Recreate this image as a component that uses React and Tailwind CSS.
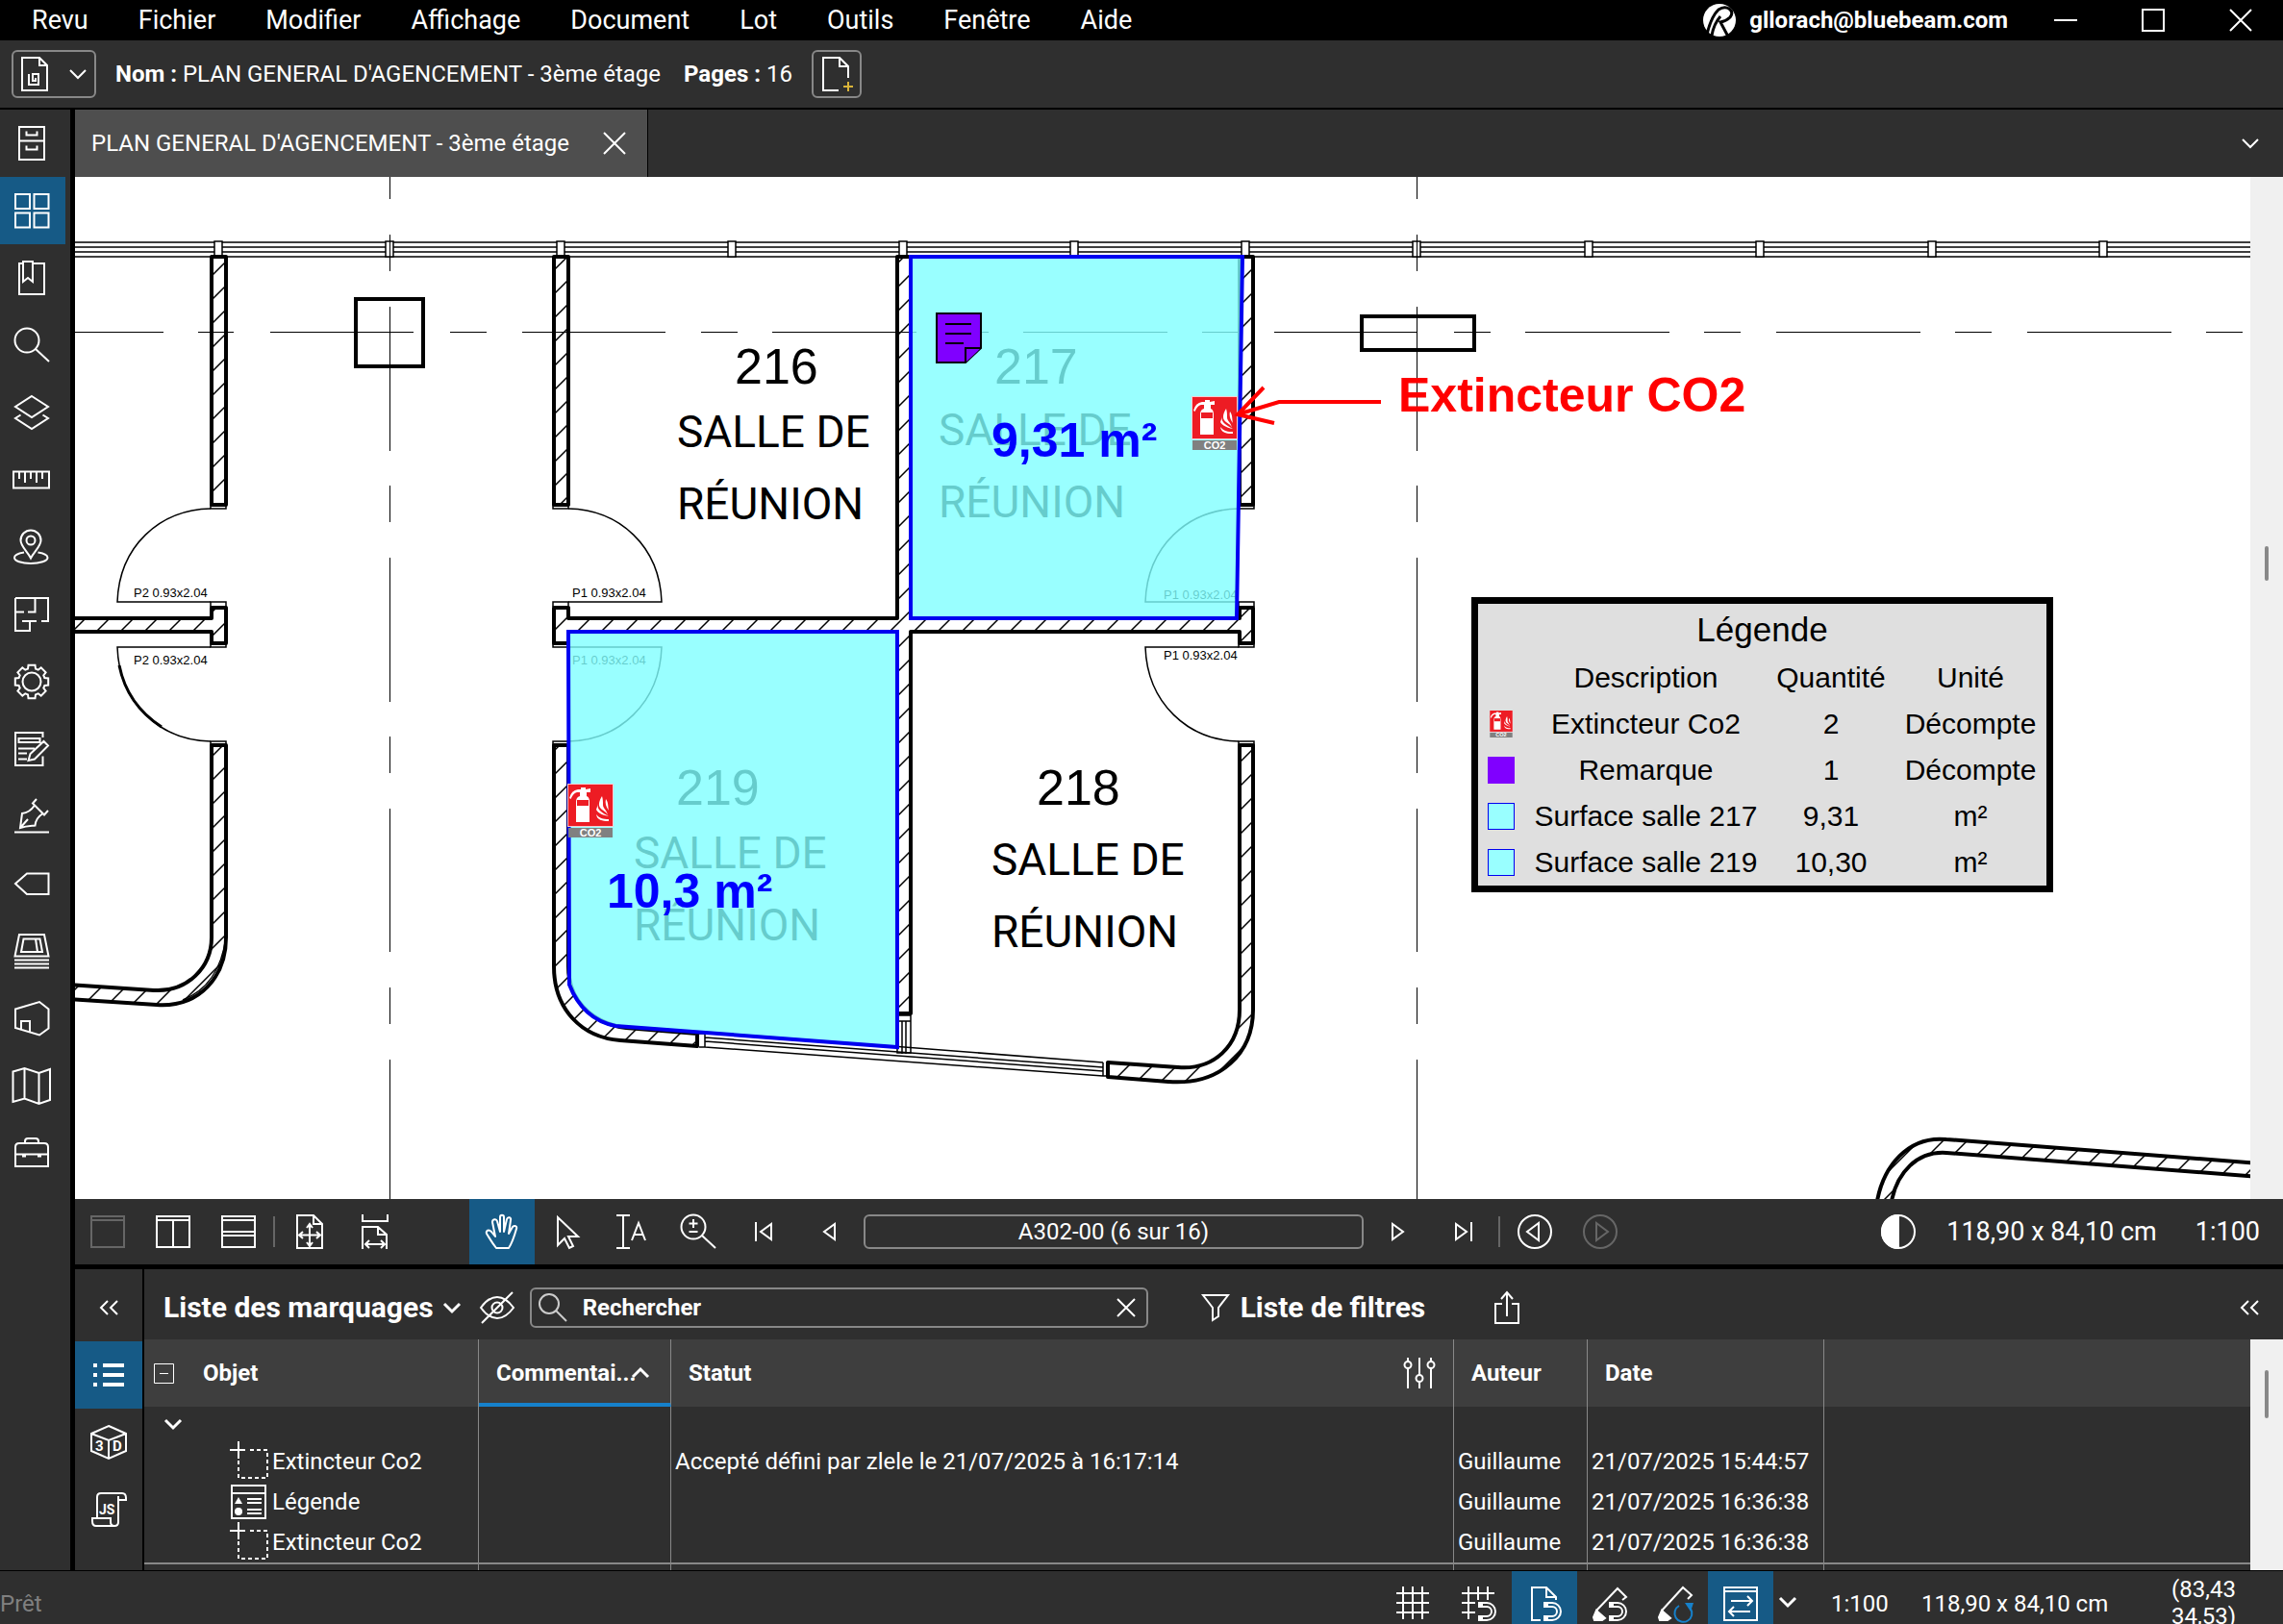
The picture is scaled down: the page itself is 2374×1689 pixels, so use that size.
import React, { useState } from 'react';

const MENUS = ['Revu', 'Fichier', 'Modifier', 'Affichage', 'Document', 'Lot', 'Outils', 'Fenêtre', 'Aide'];

const COLS = [78, 227, 405, 583, 761, 939, 1117, 1295, 1473, 1652, 1830, 2009, 2187];
const AXIS_X = [
  [78, 170], [206, 243], [281, 430], [468, 506], [543, 692], [729, 767], [803, 953], [990, 1028],
  [1064, 1214], [1250, 1288], [1325, 1474], [1512, 1550], [1586, 1736], [1772, 1810], [1847, 1997],
  [2033, 2071], [2108, 2258], [2294, 2332],
];
const AXIS_Y = [
  [184, 207], [244, 282], [319, 469], [505, 543], [580, 730], [766, 804], [841, 990], [1027, 1065], [1102, 1247],
];

const ROWS = [
  { icon: 'count', objet: 'Extincteur Co2', statut: 'Accepté défini par zlele le 21/07/2025 à 16:17:14', auteur: 'Guillaume', date: '21/07/2025 15:44:57' },
  { icon: 'legend', objet: 'Légende', statut: '', auteur: 'Guillaume', date: '21/07/2025 16:36:38' },
  { icon: 'count', objet: 'Extincteur Co2', statut: '', auteur: 'Guillaume', date: '21/07/2025 16:36:38' },
];

const LEGEND = [
  { swatch: 'badge', label: 'Extincteur Co2', qty: '2', unit: 'Décompte' },
  { swatch: 'note', label: 'Remarque', qty: '1', unit: 'Décompte' },
  { swatch: 'area', label: 'Surface salle 217', qty: '9,31', unit: 'm²' },
  { swatch: 'area', label: 'Surface salle 219', qty: '10,30', unit: 'm²' },
];

function Icon({ children, width = 36, height = 36, stroke = 2, className = '' }) {
  return (
    <svg
      width={width}
      height={height}
      viewBox={`0 0 ${width} ${height}`}
      fill="none"
      stroke="currentColor"
      strokeWidth={stroke}
      className={`shrink-0 overflow-visible ${className}`}
      aria-hidden="true"
    >
      {children}
    </svg>
  );
}

// eight square teeth around a ring
function gearPath() {
  const pts = [];
  for (let i = 0; i < 8; i++) {
    const a = (i * Math.PI) / 4 - Math.PI / 2;
    [[-0.29, 14], [-0.2, 17.5], [0.2, 17.5], [0.29, 14]].forEach(([d, r]) => {
      pts.push(`${(18 + r * Math.cos(a + d)).toFixed(1)} ${(18 + r * Math.sin(a + d)).toFixed(1)}`);
    });
  }
  return `M${pts.join('L')}Z`;
}

const Chevron = ({ className = '', stroke = 2 }) => (
  <Icon width={18} height={10} stroke={stroke} className={className}><path d="M1 1l8 8 8-8" /></Icon>
);
const Close = () => <Icon width={24} height={24}><path d="M1 1l22 22M23 1L1 23" /></Icon>;
const DoubleLeft = () => <Icon width={20} height={14} stroke={2}><path d="M9 0L2 7l7 7M19 0l-7 7 7 7" /></Icon>;

const SIDE_ICONS = [
  { name: 'Accès aux fichiers', icon: <path d="M5 1h26v34H5zM5 15.500h26M12.500 5.500v4h11v-4M12.500 20.500v4h11v-4" /> },
  { name: 'Vignettes', icon: <path d="M1 1h15v15H1zM20.500 1h15v15h-15zM1 20.500h15v15H1zM20.500 20.500h15v15h-15z" /> },
  { name: 'Signets', icon: <path d="M8 3H5v32h26V3H20M9 1h10v21l-5-4-5 4z" /> },
  { name: 'Rechercher', icon: <><circle cx="13" cy="13" r="12.500" /><path d="M22 22l14 13" /></> },
  { name: 'Calques', icon: <path d="M18 1l17 11-17 11L1 12zM6.500 20.500L1 24l17 11 17-11-5.500-3.500" /> },
  { name: 'Mesures', icon: <path d="M-1 9.500h37v17H-1zM5 10v7M11 10v11M17 10v7M23 10v11M29 10v7" /> },
  { name: 'Lieux', icon: <><path d="M17 29.500C13 22 6.500 17 6.500 11a10.500 10.500 0 0 1 21 0C27.500 17 21 22 17 29.500z" /><circle cx="17" cy="11" r="4.500" /><path d="M10 23.500C4 24.500 0 26.500 0 29c0 3.500 7.500 6 17 6s17.500-2.500 17.500-6c0-2.500-4-4.500-10-5.500" /></> },
  { name: 'Espaces', icon: <path d="M10 15.500H1M1 1h34v24h-7M1 1v34h15V25M8 25h15M21.500 1v14.500H14" /> },
  { name: 'Propriétés', icon: <><path d={gearPath()} /><circle cx="18" cy="18" r="9.500" /></> },
  { name: 'Formulaires', icon: <path d="M29.500 6V1H1v34h28.500V25.500M4.500 7h22v4h-22zM4 17.500h17M4 22.500h9M4 28.500h9M14.500 30l2-7L30.500 10l4.500 4.500L21 28.500z" /> },
  { name: 'Signatures', icon: <><path d="M23 0l-4 4.500 12 12L35 12M21 6.500c-4 6-8 8-13 8.500L6 30c7-2 12-2 15.500-2.500C22 22 25 18 29 15.500M6 30l8-9" /><path d="M0 34.500h36" /></> },
  { name: 'Jeux', icon: <path d="M1 18L13 7.500h22.500v21.500H13z" /> },
  { name: 'Lots', icon: <path d="M5 1h26l4.500 22.500H.5zM9.500 5.500h17L29 19H7zM22 5.500l2 13.500M0 27.500h36M0 31.500h36M0 35.500h36" /> },
  { name: 'Modèles 3D', icon: <path d="M1 8.500L26 1l9.500 7.500v20L26 35.500 1 28zM7 29.500V21h9v11" /> },
  { name: 'Carte', icon: <path d="M-1.500 3.500L10.500 0l15 5L37 1v32l-11.500 4-15-5.500L-1.500 35zM10.500 0v31.500M25.500 5v32" /> },
  { name: 'Outils', icon: <><path d="M1 32V12q0-4 4-4h26q4 0 4 4v20zM11 8V6q0-3 3-3h8q3 0 3 3v2M1 19.500h34" /><path d="M8 21h4M24 21h4" strokeWidth="3" /></> },
];

function Co2Badge({ x, y }) {
  return (
    <g transform={`translate(${x} ${y})`}>
      <rect x="-1" y="-1" width="48" height="45" fill="#f7c9cf" />
      <rect width="46" height="43" fill="#ed1c24" />
      <path d="M8 39V18q0-5 4-6V8H9Q5 9 2.500 15L1 14Q3 6 10 5h3V3h5v2l5-1v4h-4v4q3 1 3 6v21z" fill="#fff" />
      <rect x="9" y="16" width="12" height="6" fill="#ed1c24" />
      <path d="M35 12c-3 5-4 9-2 12 2 3 7 4 8 8-1-6-5-7-5-11 0-3 0-6-1-9zM39 15c-1 4 0 8 3 12-1-4 0-8-3-12zM31 20c-2 6 4 9 11 13-5-1-11-3-13-7zM29 31c1 6 6 7 13 7v-2c-6 0-10-1-13-5z" fill="#fff" />
      <rect y="45" width="46" height="10" fill="#808080" />
      <text x="23" y="54" textAnchor="middle" fontSize="11" fontWeight="700" fill="#fff">CO2</text>
    </g>
  );
}

function Room({ x, y, y2, y3, number, dx }) {
  return (
    <g fill="#000">
      <text x={x + dx} y={y} fontSize="52">{number}</text>
      <g fontSize="46" className="font-[Roboto,sans-serif]">
        <text x={x} y={y2}>SALLE DE</text>
        <text x={x} y={y3}>RÉUNION</text>
      </g>
    </g>
  );
}

function FloorPlan() {
  return (
    <svg
      className="block h-[1063px] w-[2263px] shrink-0 font-['Liberation_Sans',sans-serif]"
      viewBox="78 184 2263 1063"
      role="img"
      aria-label="Plan du 3ème étage"
    >
      <defs>
        <pattern id="hatch" width="25" height="25" x="7" patternUnits="userSpaceOnUse">
          <path d="M-5 30L30-5M-5 5L5-5M20 30L30 20" stroke="#000" strokeWidth="1.500" />
        </pattern>
      </defs>

      {/* facade */}
      <g stroke="#000" strokeWidth="1.500" fill="none">
        <path d="M78 252H2341M78 257H2341M78 262H2341M78 267H2341" />
        {COLS.slice(1).map((x) => <rect key={x} x={x - 4} y="251" width="8" height="16" fill="#fff" />)}
      </g>

      {/* walls */}
      <g stroke="#000" strokeWidth="4" fill="url(#hatch)" strokeLinejoin="round">
        <rect x="220" y="267" width="15" height="258" />
        <rect x="576" y="267" width="15" height="258" />
        <rect x="1289" y="267" width="14" height="258" />
        <path d="M70 643H220V632H235V669H220V657H70z" />
        <path d="M933 267H947V643H1289V632H1303V669H1289V657H947V1054H933V657H591V669H576V632H591V643H933z" />
        <path d="M235 775V975C235 1015 208 1048 163 1045L70 1039V1024L160 1030C195 1032 220 1006 220 975V775z" />
        <path d="M576 775V1005C576 1050 605 1079 645 1082L725 1088V1075L651 1069C615 1064 591 1040 591 1005V775z" />
        <path d="M1289 775V1050C1289 1088 1262 1113 1225 1110L1152 1105V1120L1215 1125C1270 1129 1303 1095 1303 1050V775z" />
        <path d="M1951 1255C1957 1212 1985 1181 2024 1185L2350 1210V1224L2024 1199C1995 1197 1971 1218 1966 1255z" />
      </g>

      {/* doors and glazing */}
      <g stroke="#000" strokeWidth="1.500" fill="none">
        <path d="M219 525v4h16v-4M219 631v-5h16v5M219 669v4h16v-4M219 775v-4h16v4" />
        <path d="M575 525v4h16v-4M575 631v-5h16v5M575 669v4h16v-4M575 775v-4h16v4" />
        <path d="M1288 525v4h16v-4M1288 631v-5h16v5M1288 669v4h16v-4M1288 775v-4h16v4" />
        <path d="M219 529C166 530 124 568 122 626H219M219 771C166 770 124 731 122 673H219" />
        <path d="M591 529C644 530 686 568 688 626H591M591 771C644 770 686 731 688 673H591" />
        <path d="M1288 529C1235 530 1193 568 1191 626H1288M1288 771C1235 770 1193 731 1191 673H1288" />
        <path d="M124 692C130 722 148 743 168 756" strokeWidth="3" />
        <path d="M219 985C215 1008 196 1026 172 1029M235 975C230 1010 215 1030 190 1040" />
        <path d="M727 1075H733V1089H727M733 1073L1147 1105M733 1079L1147 1110M733 1083L1147 1114M733 1089L1147 1119M1147 1105V1119H1152" />
        <path d="M933 1056H947V1095H933zM938 1062V1096M942 1062V1096M933 1062H947" />
      </g>

      {/* grid axes and columns */}
      <g stroke="#000" strokeWidth="1" shapeRendering="crispEdges">
        {AXIS_X.map(([a, b]) => <path key={a} d={`M${a} 345.500H${b}`} />)}
        {AXIS_Y.map(([a, b]) => <path key={a} d={`M405.500 ${a}V${b}M1473.500 ${a}V${b}`} />)}
      </g>
      <g stroke="#000" strokeWidth="4" fill="none">
        <rect x="370" y="311" width="70" height="70" />
        <rect x="1416" y="329" width="117" height="35" />
      </g>

      <g fontSize="13" fill="#000">
        <text x="139" y="621">P2 0.93x2.04</text>
        <text x="139" y="691">P2 0.93x2.04</text>
        <text x="595" y="621">P1 0.93x2.04</text>
        <text x="595" y="691">P1 0.93x2.04</text>
        <text x="1210" y="623">P1 0.93x2.04</text>
        <text x="1210" y="686">P1 0.93x2.04</text>
      </g>

      <Room number="216" x={704} dx={60} y={399} y2={465} y3={540} />
      <Room number="217" x={976} dx={58} y={399} y2={463} y3={538} />
      <Room number="219" x={659} dx={44} y={837} y2={903} y3={978} />
      <Room number="218" x={1031} dx={47} y={837} y2={910} y3={985} />

      {/* measured areas */}
      <g fill="#80ffff" fillOpacity="0.8" stroke="#0000f0" strokeWidth="4">
        <path d="M947 267H1292L1286 643H947z" />
        <path d="M591 657H933V1089L640 1067Q606 1060 592 1024z" />
      </g>
      <g fill="#00f" fontSize="50" fontWeight="700">
        <text x="1031" y="475">9,31 m²</text>
        <text x="631" y="944">10,3 m²</text>
      </g>

      {/* note */}
      <g stroke="#000" strokeWidth="2" fill="#8000ff">
        <path d="M974 326h46v36l-16 15h-30z" />
        <path d="M1004 377v-15h16M983 337h27M983 347h27M983 357h19" />
      </g>

      <Co2Badge x={1240} y={413} />
      <Co2Badge x={591} y={816} />

      {/* callout */}
      <path d="M1436 418H1330L1287 431M1314 403L1287 431L1325 440" fill="none" stroke="#f00" strokeWidth="4" />
      <text x="1454" y="428" fontSize="50" fontWeight="700" fill="#f00">Extincteur CO2</text>
    </svg>
  );
}

function Swatch({ kind }) {
  if (kind === 'badge') {
    return (
      <svg width="24" height="28" viewBox="0 0 46 55" className="mx-auto block">
        <Co2Badge x={0} y={0} />
      </svg>
    );
  }
  if (kind === 'note') return <div className="mx-auto h-7 w-7 bg-[#8000ff]" />;
  return <div className="mx-auto h-7 w-7 border border-[#0000f0] bg-[#99ffff]" />;
}

function Legend() {
  return (
    <table className="absolute left-[1452px] top-[437px] w-[605px] table-fixed border-separate border-spacing-0 border-[7px] border-black bg-[#dfdfdf] text-center font-['Liberation_Sans',sans-serif] text-[30px] leading-none text-black">
      <caption className="sr-only">Légende du plan</caption>
      <colgroup>
        <col className="w-12" />
        <col className="w-[253px]" />
        <col className="w-[132px]" />
        <col />
      </colgroup>
      <thead>
        <tr className="h-[53px]">
          <th colSpan={4} className="text-[35px]/[36px] font-normal">Légende</th>
        </tr>
        <tr className="h-12">
          <th />
          <th className="font-normal">Description</th>
          <th className="font-normal">Quantité</th>
          <th className="font-normal">Unité</th>
        </tr>
      </thead>
      <tbody>
        {LEGEND.map((item) => (
          <tr key={item.label} className="h-12">
            <td><Swatch kind={item.swatch} /></td>
            <td className="whitespace-nowrap">{item.label}</td>
            <td>{item.qty}</td>
            <td>{item.unit}</td>
          </tr>
        ))}
      </tbody>
    </table>
  );
}

function ToolButton({ label, active, disabled, children }) {
  return (
    <button
      type="button"
      aria-label={label}
      disabled={disabled}
      className={`flex h-full w-[68px] shrink-0 items-center justify-center ${active ? 'bg-[#165a86]' : ''} ${disabled ? 'text-[#666]' : ''}`}
    >
      {children}
    </button>
  );
}

const Separator = () => <div className="mx-0.5 h-8 w-0.5 shrink-0 bg-[#666]" />;

function NavBar() {
  const [page, setPage] = useState('A302-00 (6 sur 16)');

  return (
    <div className="flex h-[68px] shrink-0 items-center bg-[#2f2f2f] pr-6">
      <ToolButton label="Vue simple" disabled><Icon><path d="M1 2h34v32H1zM1 6h34" /></Icon></ToolButton>
      <ToolButton label="Fractionner verticalement"><Icon><path d="M1 2h34v32H1zM1 6h34M18 6v28" /></Icon></ToolButton>
      <ToolButton label="Fractionner horizontalement"><Icon><path d="M1 2h34v32H1zM1 6h34M1 18h34M1 22h34" /></Icon></ToolButton>
      <Separator />
      <ToolButton label="Ajuster à la page">
        <Icon><path d="M5 1h17l9 9v25H5zM22 1v9h9M18 11v21M8 21.500h20M15 14l3-4 3 4M15 29l3 4 3-4M11 18l-4 3.500 4 3.500M25 18l4 3.500-4 3.500" /></Icon>
      </ToolButton>
      <ToolButton label="Ajuster à la largeur">
        <Icon><path d="M5 0v7h26V0M5 36V13h16l9 8v15M21 13v8h9M8 31h20M12 27l-4 4 4 4M24 27l4 4-4 4" /></Icon>
      </ToolButton>
      <div className="w-16 shrink-0" />
      <ToolButton label="Panoramique" active>
        <Icon><path d="M12 35C8 30 5 25 2 20c-1-3 2-5 5-2l4 5L8 8c0-3 4-4 5-1l3 11V3c0-3 4-3 4 0v15l3-13c1-3 5-2 4 1l-2 14 4-7c2-2 5-1 4 2-2 7-4 14-8 20z" strokeLinejoin="round" /></Icon>
      </ToolButton>
      <ToolButton label="Sélectionner">
        <Icon><path d="M8 3v29l7-7 5 10 4-2-5-10h10z" /></Icon>
      </ToolButton>
      <ToolButton label="Sélectionner du texte">
        <Icon><path d="M1 1h14M1 35h14M8 1v34M17 27l7-18 7 18M19 21h10" /></Icon>
      </ToolButton>
      <ToolButton label="Zoom">
        <Icon><circle cx="13" cy="13" r="12.500" /><path d="M22 22l14 13M13 5v9M8.500 9.500h9M8.500 18h9" /></Icon>
      </ToolButton>
      <ToolButton label="Première page"><Icon width={20} height={20}><path d="M2 0v20M18 2v16L7 10z" /></Icon></ToolButton>
      <ToolButton label="Page précédente"><Icon width={14} height={20}><path d="M13 2v16L2 10z" /></Icon></ToolButton>
      <input
        aria-label="Page"
        value={page}
        onChange={(e) => setPage(e.target.value)}
        className="mx-0.5 h-9 w-[520px] min-w-0 rounded-md border-2 border-[#888] bg-transparent text-center text-2xl outline-none"
      />
      <ToolButton label="Page suivante"><Icon width={14} height={20}><path d="M1 2v16l11-8z" /></Icon></ToolButton>
      <ToolButton label="Dernière page"><Icon width={20} height={20}><path d="M18 0v20M2 2v16l11-8z" /></Icon></ToolButton>
      <Separator />
      <ToolButton label="Vue précédente"><Icon><circle cx="18" cy="18" r="17" /><path d="M22 9v18L10 18z" /></Icon></ToolButton>
      <ToolButton label="Vue suivante" disabled><Icon><circle cx="18" cy="18" r="17" /><path d="M14 9v18l12-9z" /></Icon></ToolButton>
      <div className="ml-auto flex items-center">
        <button type="button" aria-label="Assombrir l'interface">
          <Icon><circle cx="18" cy="18" r="17" /><path d="M18 1a17 17 0 0 0 0 34z" fill="currentColor" /></Icon>
        </button>
        <span className="ml-8 whitespace-nowrap text-[27px]">118,90 x 84,10 cm</span>
        <span className="ml-10 text-[27px]">1:100</span>
      </div>
    </div>
  );
}

function RowIcon({ kind }) {
  if (kind === 'legend') {
    return (
      <Icon width={40} height={36}>
        <path d="M1 1h35v34H1zM1 9h35M17 15h15M17 19h15M17 26h15M17 30h15" />
        <path d="M8 13l4 7H4z" fill="currentColor" stroke="none" />
        <circle cx="8" cy="28" r="4" fill="currentColor" stroke="none" />
      </Icon>
    );
  }
  return (
    <Icon width={40} height={36}>
      <path d="M-1 6h16M8-3v18" />
      <path d="M20 6h18v29H8V16" strokeDasharray="4 3" />
    </Icon>
  );
}

function MarkupsTable() {
  const cell = 'border-r border-[#888] whitespace-nowrap overflow-hidden';
  return (
    <table className="w-full table-fixed border-separate border-spacing-0 text-left text-2xl leading-none">
      <colgroup>
        <col className="w-[348px]" />
        <col className="w-[200px]" />
        <col className="w-[814px]" />
        <col className="w-[139px]" />
        <col className="w-[246px]" />
        <col />
      </colgroup>
      <thead>
        <tr className="h-[70px] bg-[#3e3e3e]">
          <th className={`${cell} pl-2.5 font-bold`}>
            <div className="flex items-center gap-[30px]">
              <button type="button" aria-label="Tout réduire">
                <Icon width={21} height={21} stroke={1}><path d="M.5.5h20v20H.5zM6 10.500h9" /></Icon>
              </button>
              Objet
            </div>
          </th>
          <th className={`${cell} border-b-4 border-b-[#1681cb] pl-[18px] pt-1 font-bold`}>
            <div className="flex items-center">
              Commentai...
              <Chevron stroke={3} className="-ml-1 rotate-180" />
            </div>
          </th>
          <th className={`${cell} pl-[18px] pr-[19px] font-bold`}>
            <div className="flex items-center justify-between">
              Statut
              <button type="button" aria-label="Gérer les colonnes">
                <Icon width={32} height={34}>
                  <path d="M4 1v4M4 12v21M16 1v18M16 26v7M28 1v4M28 12v21" />
                  <circle cx="4" cy="8.500" r="3.500" /><circle cx="16" cy="22.500" r="3.500" /><circle cx="28" cy="8.500" r="3.500" />
                </Icon>
              </button>
            </div>
          </th>
          <th className={`${cell} pl-[18px] font-bold`}>Auteur</th>
          <th className={`${cell} pl-[18px] font-bold`}>Date</th>
          <th />
        </tr>
      </thead>
      <tbody>
        <tr className="h-9">
          <td className={`${cell} pl-[21px]`}>
            <button type="button" aria-label="Réduire le groupe" className="flex"><Chevron stroke={3} /></button>
          </td>
          <td className={cell} /><td className={cell} /><td className={cell} /><td className={cell} /><td />
        </tr>
        {ROWS.map((row, i) => (
          <tr key={i} className="h-[42px]">
            <td className={`${cell} py-0 pl-[90px]`}>
              <div className="flex items-center gap-[3px]"><RowIcon kind={row.icon} />{row.objet}</div>
            </td>
            <td className={cell} />
            <td className={`${cell} pl-1`}>{row.statut}</td>
            <td className={`${cell} pl-1`}>{row.auteur}</td>
            <td className={`${cell} pl-1`}>{row.date}</td>
            <td />
          </tr>
        ))}
        <tr className="h-2">
          {[0, 1, 2, 3, 4].map((n) => <td key={n} className="border-r border-t-2 border-[#888]" />)}
          <td className="border-t-2 border-[#888]" />
        </tr>
      </tbody>
    </table>
  );
}

function MarkupsPanel() {
  const [query, setQuery] = useState('Rechercher');
  return (
    <section className="flex h-[313px] shrink-0 overflow-hidden bg-[#2f2f2f]">
      <div className="flex w-[72px] shrink-0 flex-col border-r-2 border-black">
        <button type="button" aria-label="Réduire" className="flex h-[75px] items-center justify-center pt-1"><DoubleLeft /></button>
        <button type="button" aria-label="Marquages" className="flex h-[70px] items-center justify-center bg-[#165a86]">
          <Icon width={32} height={26} stroke={4}><path d="M0 3h4M10 3h22M0 13h4M10 13h22M0 23h4M10 23h22" /></Icon>
        </button>
        <button type="button" aria-label="Modèle 3D" className="flex h-[70px] items-center justify-center">
          <Icon width={40} height={36}>
            <path d="M20 1l18 8v18l-18 8-18-8V9zM2 9l18 7 18-7M20 16v19" />
            <text x="6" y="27" fontSize="15" fontWeight="700" fill="currentColor" stroke="none">3</text>
            <text x="24" y="27" fontSize="15" fontWeight="700" fill="currentColor" stroke="none">D</text>
          </Icon>
        </button>
        <button type="button" aria-label="JavaScript" className="flex h-[70px] items-center justify-center">
          <Icon>
            <path d="M6 27V5q0-4 4-4h22q4 0 4 5v2h-8V4M28 8v23q0 4-4 4H5q-4 0-4-5v-3h19v4q0 4 4 4" />
            <text x="8" y="23" fontSize="14" fontWeight="700" fill="currentColor" stroke="none">JS</text>
          </Icon>
        </button>
      </div>

      <div className="flex min-w-0 flex-1 flex-col">
        <div className="flex h-[73px] shrink-0 items-center pl-5 pr-[25px] pt-1.5">
          <button type="button" className="flex items-center gap-2.5 whitespace-nowrap text-3xl/9 font-bold">
            Liste des marquages
            <Chevron stroke={3} />
          </button>
          <button type="button" aria-label="Masquer les marquages" className="ml-5">
            <Icon>
              <path d="M1 18Q9 7 18 7t17 11Q27 29 18 29T1 18zM34 2L2 34" />
              <circle cx="18" cy="18" r="5.500" />
            </Icon>
          </button>
          <label className="ml-4 flex h-[42px] w-[643px] items-center rounded-md border-2 border-[#888] pl-[7px] pr-[11px]">
            <Icon width={30} height={30} className="text-[#ccc]"><circle cx="11" cy="11" r="10" /><path d="M18 18l11 11" /></Icon>
            <input
              aria-label="Rechercher"
              value={query}
              onChange={(e) => setQuery(e.target.value)}
              className="ml-4 min-w-0 flex-1 bg-transparent text-2xl font-bold outline-none"
            />
            <button type="button" aria-label="Effacer"><Icon width={20} height={20}><path d="M1 1l18 18M19 1L1 19" /></Icon></button>
          </label>
          <button type="button" className="ml-14 flex items-center gap-3 whitespace-nowrap text-3xl/9 font-bold">
            <Icon width={28} height={28}><path d="M1 1h26L17 14v9l-6 4V14z" /></Icon>
            Liste de filtres
          </button>
          <button type="button" aria-label="Exporter" className="ml-[72px]">
            <Icon width={26} height={34}><path d="M8 13H1v20h24V13h-7M13 26V2M7 8l6-7 6 7" /></Icon>
          </button>
          <button type="button" aria-label="Réduire le panneau" className="ml-auto"><DoubleLeft /></button>
        </div>
        <div className="flex min-h-0 flex-1">
          <div className="min-w-0 flex-1 overflow-hidden"><MarkupsTable /></div>
          <div className="w-[34px] shrink-0 bg-[#f0f0f0] pt-8">
            <div className="mx-auto h-[50px] w-1 rounded-full bg-[#888]" />
          </div>
        </div>
      </div>
    </section>
  );
}

const Magnet = () => (
  <>
    <path d="M18 17h8a9 9 0 0 1 0 18h-8v-4h8a5 5 0 0 0 0-10h-8z" />
    <path d="M17 16h5v6h-5zM17 30h5v6h-5z" fill="currentColor" stroke="none" />
  </>
);
const PenNib = () => <path d="M4 25l9 8-3 2H2l-1-3z" fill="currentColor" />;

function StatusBar() {
  return (
    <footer className="flex h-[56px] shrink-0 items-center overflow-hidden border-t border-black bg-[#2f2f2f] text-2xl">
      <span className="mt-3 text-[#808080]">Prêt</span>
      <div className="ml-auto flex h-full items-center">
        <ToolButton label="Grille"><Icon className="mt-3"><path d="M7 0v34M17 0v34M27 0v34M0 7h34M0 17h34M0 27h34" /></Icon></ToolButton>
        <ToolButton label="Accrocher à la grille">
          <Icon className="mt-3"><path d="M7 0v34M17 0v14M27 0v14M0 7h34M0 17h14M0 27h14" /><Magnet /></Icon>
        </ToolButton>
        <ToolButton label="Accrocher au contenu" active>
          <Icon className="mt-3"><path d="M14 35H5V1h15l10 10v3M20 1v10h10" /><Magnet /></Icon>
        </ToolButton>
        <ToolButton label="Accrocher aux marquages">
          <Icon className="mt-3"><path d="M4 25L26 2l9 9-4 3" /><PenNib /><Magnet /></Icon>
        </ToolButton>
        <ToolButton label="Réutiliser">
          <Icon className="mt-3">
            <path d="M4 25L26 1l9 8-4 4" /><PenNib />
            <path d="M22 20a9 9 0 1 0 12 3" stroke="#1681cb" />
            <path d="M28 17h9l-3 9z" fill="#1681cb" stroke="none" />
          </Icon>
        </ToolButton>
        <ToolButton label="Synchroniser" active>
          <Icon className="mt-3"><path d="M1 1h34v34H1zM1 5h34M8 15h22M25 10l5 5-5 5M28 26H6M11 21l-5 5 5 5" /></Icon>
        </ToolButton>
        <button type="button" aria-label="Options" className="ml-1.5 mt-2"><Chevron stroke={3} /></button>
        <span className="ml-9 mt-3 w-[94px]">1:100</span>
        <span className="mt-3 w-[260px] whitespace-nowrap">118,90 x 84,10 cm</span>
        <span className="mt-2.5 w-[116px] pr-8 text-2xl/7">(83,43 34,53)</span>
      </div>
    </footer>
  );
}

export default function App() {
  const [activePanel, setActivePanel] = useState('Vignettes');

  return (
    <div className="flex h-screen flex-col overflow-hidden bg-black font-[Roboto,sans-serif] text-white">
      <header className="flex h-[42px] shrink-0 items-center pl-[7px] pr-8">
        <nav className="flex">
          {MENUS.map((m) => <button key={m} type="button" className="px-[26px] text-[27px]/[42px]">{m}</button>)}
        </nav>
        <div className="ml-auto flex items-center">
          <Icon width={34} height={34} stroke={0}>
            <circle cx="17" cy="17" r="17" fill="#fff" />
            <path d="M4 32Q8 14 16 6q6-4 11-1 5 4 1 9-4 4-10 5l8 15M9 33q2-12 9-20" fill="none" stroke="#000" strokeWidth="3" />
          </Icon>
          <span className="ml-3.5 text-2xl font-bold">gllorach@bluebeam.com</span>
          <button type="button" aria-label="Réduire" className="ml-12"><Icon width={24} height={24}><path d="M0 12h24" /></Icon></button>
          <button type="button" aria-label="Agrandir" className="ml-[67px]"><Icon width={24} height={24}><path d="M1 1h22v22H1z" /></Icon></button>
          <button type="button" aria-label="Fermer" className="ml-[67px]"><Close /></button>
        </div>
      </header>

      <div className="mb-0.5 flex h-[70px] shrink-0 items-center bg-[#2f2f2f] px-3 text-2xl">
        <button type="button" aria-label="Modèle de document" className="flex h-[50px] w-[88px] items-center justify-between rounded-md border-2 border-[#888] px-2">
          <Icon width={28} height={36}><path d="M1 1h18l8 8v26H1zM19 1v8h8M8 18v11h10V18h-6v7h3v-3" /></Icon>
          <Chevron />
        </button>
        <span className="ml-5 whitespace-nowrap"><b>Nom :</b> PLAN GENERAL D'AGENCEMENT - 3ème étage</span>
        <span className="ml-6 whitespace-nowrap"><b>Pages :</b> 16</span>
        <button type="button" aria-label="Ajouter une page" className="ml-5 flex h-[50px] w-[52px] items-center justify-center rounded-md border-2 border-[#888]">
          <Icon width={30} height={36}><path d="M17 35H1V1h17l9 9v12M18 1v9h9" /><path d="M27 26v10M22 31h10" stroke="#d9b43a" /></Icon>
        </button>
      </div>

      <div className="flex min-h-0 flex-1">
        <aside className="mr-[5px] w-[73px] shrink-0 bg-[#2f2f2f]">
          {SIDE_ICONS.map(({ name, icon }) => (
            <button
              key={name}
              type="button"
              aria-label={name}
              onClick={() => setActivePanel(name)}
              className={`flex h-[70px] w-[68px] items-center justify-center pr-0.5 ${activePanel === name ? 'bg-[#165a86]' : ''}`}
            >
              <Icon>{icon}</Icon>
            </button>
          ))}
        </aside>

        <main className="flex min-w-0 flex-1 flex-col">
          <div className="flex h-[70px] shrink-0 items-center bg-[#2f2f2f] pr-[25px]">
            <div className="flex h-full items-center border-r border-black bg-[#4e4e4e] pl-[17px] pr-[22px] text-2xl">
              <span className="whitespace-nowrap">PLAN GENERAL D'AGENCEMENT - 3ème étage</span>
              <button type="button" aria-label="Fermer l'onglet" className="ml-[35px]"><Close /></button>
            </div>
            <button type="button" aria-label="Liste des onglets" className="ml-auto"><Chevron /></button>
          </div>

          <div className="flex min-h-0 flex-1 overflow-hidden bg-white">
            <div className="relative min-w-0 flex-1 overflow-hidden">
              <FloorPlan />
              <Legend />
            </div>
            <div className="w-[34px] shrink-0 bg-[#f0f0f0] pt-96">
              <div className="mx-auto h-9 w-1 rounded-full bg-[#888]" />
            </div>
          </div>

          <NavBar />
          <div className="h-[5px] shrink-0 bg-black" />
          <MarkupsPanel />
        </main>
      </div>

      <StatusBar />
    </div>
  );
}
